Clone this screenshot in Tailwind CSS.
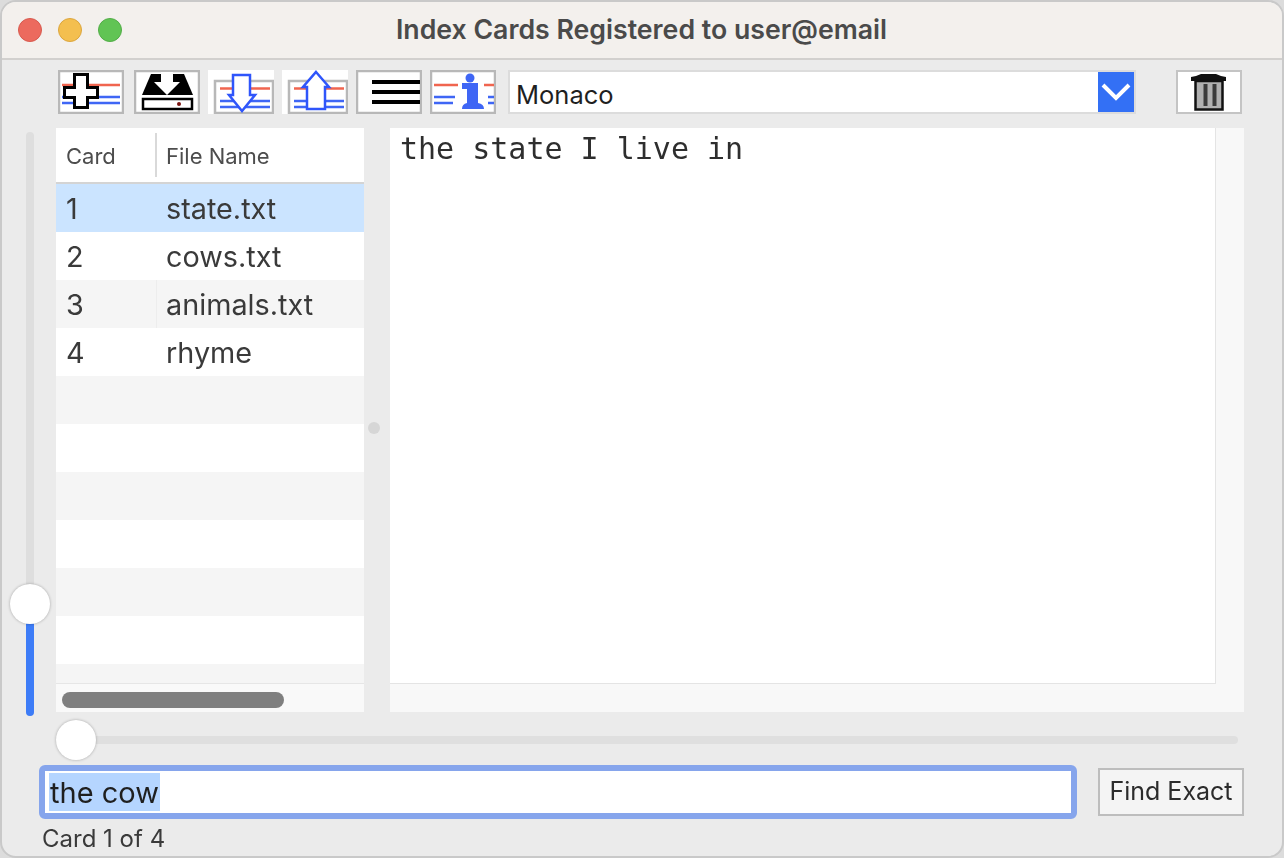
<!DOCTYPE html>
<html>
<head>
    <script src="https://cdn.jsdelivr.net/npm/@tailwindcss/browser@4"></script>
    <title>Index Cards</title>
</head>
<body class="bg-[#dcdcdc]">
    <div class="w-[1284px] h-[858px] overflow-hidden flex flex-col rounded-[16px] border-2 border-[#c9c9c9] bg-[#ebebeb] font-['Inter',sans-serif] text-[#333] blur-[0.5px]">

        <!-- title bar -->
        <div class="h-[58px] shrink-0 flex items-center relative bg-[#f3f0ed] border-b-2 border-[#d2d0ce]">
            <div class="flex gap-[16px] ml-[16px]">
                <div class="w-[24px] h-[24px] rounded-full bg-[#ec6a5e] border border-[#d85a4f]"></div>
                <div class="w-[24px] h-[24px] rounded-full bg-[#f4bf4f] border border-[#dca63e]"></div>
                <div class="w-[24px] h-[24px] rounded-full bg-[#61c454] border border-[#52ad47]"></div>
            </div>
            <div class="flex-1 text-center text-[26.7px] font-semibold text-[#4a4a4a] pr-[121px] pb-[2px] whitespace-nowrap">Index Cards Registered to user@email</div>
        </div>

        <!-- toolbar -->
        <div class="flex items-start h-[44px] mt-[10px] ml-[56px] shrink-0">
            <svg width="66" height="44" viewBox="0 0 66 44">
                <rect x="1" y="1" width="64" height="42" fill="#fff" stroke="#b8b8b8" stroke-width="2.500"/>
                <path d="M4 15H62" stroke="#f0654f" stroke-width="2.500"/>
                <path d="M4 27H62M4 33H62" stroke="#3f66f5" stroke-width="2.500"/>
                <path d="M16.500 4.500H29.500V17.500H39.500V27.500H29.500V37.500H16.500V27.500H6.500V17.500H16.500Z" fill="#fff" stroke="#000" stroke-width="3"/>
            </svg>
            <svg class="ml-[10px]" width="66" height="44" viewBox="0 0 66 44">
                <rect x="1" y="1" width="64" height="42" fill="#fff" stroke="#b8b8b8" stroke-width="2.500"/>
                <path d="M8 25L17 4H50L59 25Z" fill="#000"/>
                <path d="M27 2H39V12H46L33 25L20 12H27Z" fill="#fff"/>
                <rect x="9" y="29" width="49" height="10" fill="#fff" stroke="#000" stroke-width="2.500"/>
                <circle cx="45" cy="34" r="2" fill="#7a1410"/>
            </svg>
            <svg class="ml-[8px]" width="66" height="44" viewBox="0 0 66 44">
                <rect width="66" height="44" fill="#fff"/>
                <rect x="7" y="11" width="58" height="32" fill="#fff" stroke="#b8b8b8" stroke-width="2.500"/>
                <path d="M12 18.500H62" stroke="#f0654f" stroke-width="2.500"/>
                <path d="M12 31H62M12 37H62" stroke="#3f66f5" stroke-width="2.500"/>
                <path d="M25 5H42V25H47L34 41L21 25H25Z" fill="#fff" stroke="#2f55fb" stroke-width="2.500"/>
            </svg>
            <svg class="ml-[8px]" width="66" height="44" viewBox="0 0 66 44">
                <rect width="66" height="44" fill="#fff"/>
                <rect x="7" y="11" width="58" height="32" fill="#fff" stroke="#b8b8b8" stroke-width="2.500"/>
                <path d="M12 18.500H62" stroke="#f0654f" stroke-width="2.500"/>
                <path d="M12 31H62M12 37H62" stroke="#3f66f5" stroke-width="2.500"/>
                <path d="M34 2L47 17H43V39H25V17H21Z" fill="#fff" stroke="#2f55fb" stroke-width="2.500"/>
            </svg>
            <svg class="ml-[8px]" width="66" height="44" viewBox="0 0 66 44">
                <rect x="1" y="1" width="64" height="42" fill="#fff" stroke="#b8b8b8" stroke-width="2.500"/>
                <path d="M16 12H64M16 22H64M16 32H64" stroke="#000" stroke-width="4"/>
            </svg>
            <svg class="ml-[8px]" width="66" height="44" viewBox="0 0 66 44">
                <rect x="1" y="1" width="64" height="42" fill="#fff" stroke="#b8b8b8" stroke-width="2.500"/>
                <path d="M4 15H28M54 15H64" stroke="#f0654f" stroke-width="2.500"/>
                <path d="M4 27H25M4 33H23M58 27H64M58 33H64" stroke="#3f66f5" stroke-width="2.500"/>
                <circle cx="40" cy="8" r="4.500" fill="#3f66f5"/>
                <path d="M32 13H48V33Q54 34 54 39H32Q32 34 37 33V19H32Z" fill="#3f66f5"/>
            </svg>
            <div class="ml-[12px] w-[628px] h-[44px] flex border-2 border-[#dcdcdc] bg-white">
                <div class="flex-1 flex items-center pl-[6px] pt-[6px] text-[25.500px] text-[#1f1f1f]">Monaco</div>
                <div class="w-[36px] bg-[#3370f5] flex items-center justify-center">
                    <svg width="32" height="20" viewBox="0 0 32 20"><path d="M3 3L16 16L29 3" fill="none" stroke="#fff" stroke-width="4"/></svg>
                </div>
            </div>
            <div class="ml-[40px] w-[66px] h-[44px] border-2 border-[#c4c4c4] bg-white">
                <svg width="62" height="40" viewBox="2 2 62 40">
                    <path d="M25 4H40L45 6L50 7V11H15V7L20 6Z" fill="#111"/>
                    <path d="M19.500 11H46.500V39.500H19.500Z" fill="#b0b0b0" stroke="#111" stroke-width="2.500"/>
                    <path d="M29.500 14V36M38.500 14V36" stroke="#3a3a3a" stroke-width="4"/>
                </svg>
            </div>
        </div>

        <!-- main area -->
        <div class="flex h-[584px] mt-[14px] ml-[24px] shrink-0">
            <div class="relative w-[8px] h-[584px] mt-[4px] rounded-full bg-[#dedede] shrink-0">
                <div class="absolute left-0 right-0 top-[472px] bottom-0 bg-[#3d7cf7] rounded-full"></div>
                <div class="absolute left-[-16px] top-[452px] w-[40px] h-[40px] rounded-full bg-white shadow-[0_0_3px_rgba(0,0,0,0.3)]"></div>
            </div>

            <!-- card table -->
            <div class="ml-[22px] w-[308px] flex flex-col shrink-0 bg-white">
                <div class="h-[56px] flex items-center border-b-2 border-[#d4d4d4] text-[22px] text-[#4d4d4d]">
                    <div class="w-[101px] h-[44px] flex items-center pl-[10px] pt-[2px] border-r-2 border-[#d9d9d9]">Card</div>
                    <div class="pl-[9px] pt-[2px]">File Name</div>
                </div>
                <div class="h-[48px] flex items-center pt-[2px] bg-[#cbe4ff] text-[28.800px] text-[#3a3a3a]"><div class="w-[110px] pl-[10px]">1</div><div>state.txt</div></div>
                <div class="h-[48px] flex items-center pt-[2px] bg-white text-[28.800px] text-[#3a3a3a]"><div class="w-[110px] pl-[10px]">2</div><div>cows.txt</div></div>
                <div class="h-[48px] flex items-center bg-[#f5f5f5] text-[28.800px] text-[#3a3a3a]"><div class="w-[101px] h-full flex items-center pt-[2px] pl-[10px] border-r border-[#ededed]">3</div><div class="pl-[9px] pt-[2px]">animals.txt</div></div>
                <div class="h-[48px] flex items-center pt-[2px] bg-white text-[28.800px] text-[#3a3a3a]"><div class="w-[110px] pl-[10px]">4</div><div>rhyme</div></div>
                <div class="h-[48px] bg-[#f5f5f5]"></div>
                <div class="h-[48px] bg-white"></div>
                <div class="h-[48px] bg-[#f5f5f5]"></div>
                <div class="h-[48px] bg-white"></div>
                <div class="h-[48px] bg-[#f5f5f5]"></div>
                <div class="h-[48px] bg-white"></div>
                <div class="h-[20px] bg-[#f5f5f5] border-b border-[#e6e6e6]"></div>
                <div class="flex-1 bg-[#f9f9f9] pt-[8px] pl-[6px]">
                    <div class="w-[222px] h-[16px] rounded-full bg-[#7f7f7f]"></div>
                </div>
            </div>

            <!-- splitter -->
            <div class="w-[26px] shrink-0 flex items-center pl-[4px] pt-[16px]">
                <div class="w-[12px] h-[12px] rounded-full bg-[#d6d6d6]"></div>
            </div>

            <!-- text pane -->
            <div class="w-[854px] flex flex-col bg-[#f8f8f8] shrink-0">
                <div class="w-[826px] h-[556px] bg-white border-r border-b border-[#e4e4e4] pl-[10px] pt-[3px] font-['DejaVu_Sans_Mono',monospace] text-[30px] leading-[36px] text-[#2e2e2e]">the state I live in</div>
            </div>
        </div>

        <!-- lower slider -->
        <div class="relative h-[8px] w-[1182px] mt-[24px] ml-[54px] rounded-full bg-[#dfdfdf] shrink-0">
            <div class="absolute left-0 top-[-16px] w-[40px] h-[40px] rounded-full bg-white shadow-[0_0_3px_rgba(0,0,0,0.3)]"></div>
        </div>

        <!-- find row -->
        <div class="flex mt-[21px] ml-[37px] shrink-0">
            <div class="w-[1038px] h-[54px] rounded-[6px] border-[6px] border-[#86a5ec] bg-white pl-[4px] pt-[2px] text-[29px] leading-[38px] text-[#1f1f1f]">
                <span class="inline-block h-[38px] bg-[#b5d5ff] pl-[1px] pr-[1px] pt-[1px] align-top">the cow</span>
            </div>
            <div class="ml-[21px] mt-[3px] w-[146px] h-[48px] flex items-center justify-center border-2 border-[#bdbdbd] bg-[#f4f4f4] text-[25px] text-[#2b2b2b]">Find Exact</div>
        </div>

        <!-- status -->
        <div class="ml-[40px] mt-[4px] text-[24px] leading-[32px] text-[#3a3a3a]">Card 1 of 4</div>
    </div>
</body>
</html>
